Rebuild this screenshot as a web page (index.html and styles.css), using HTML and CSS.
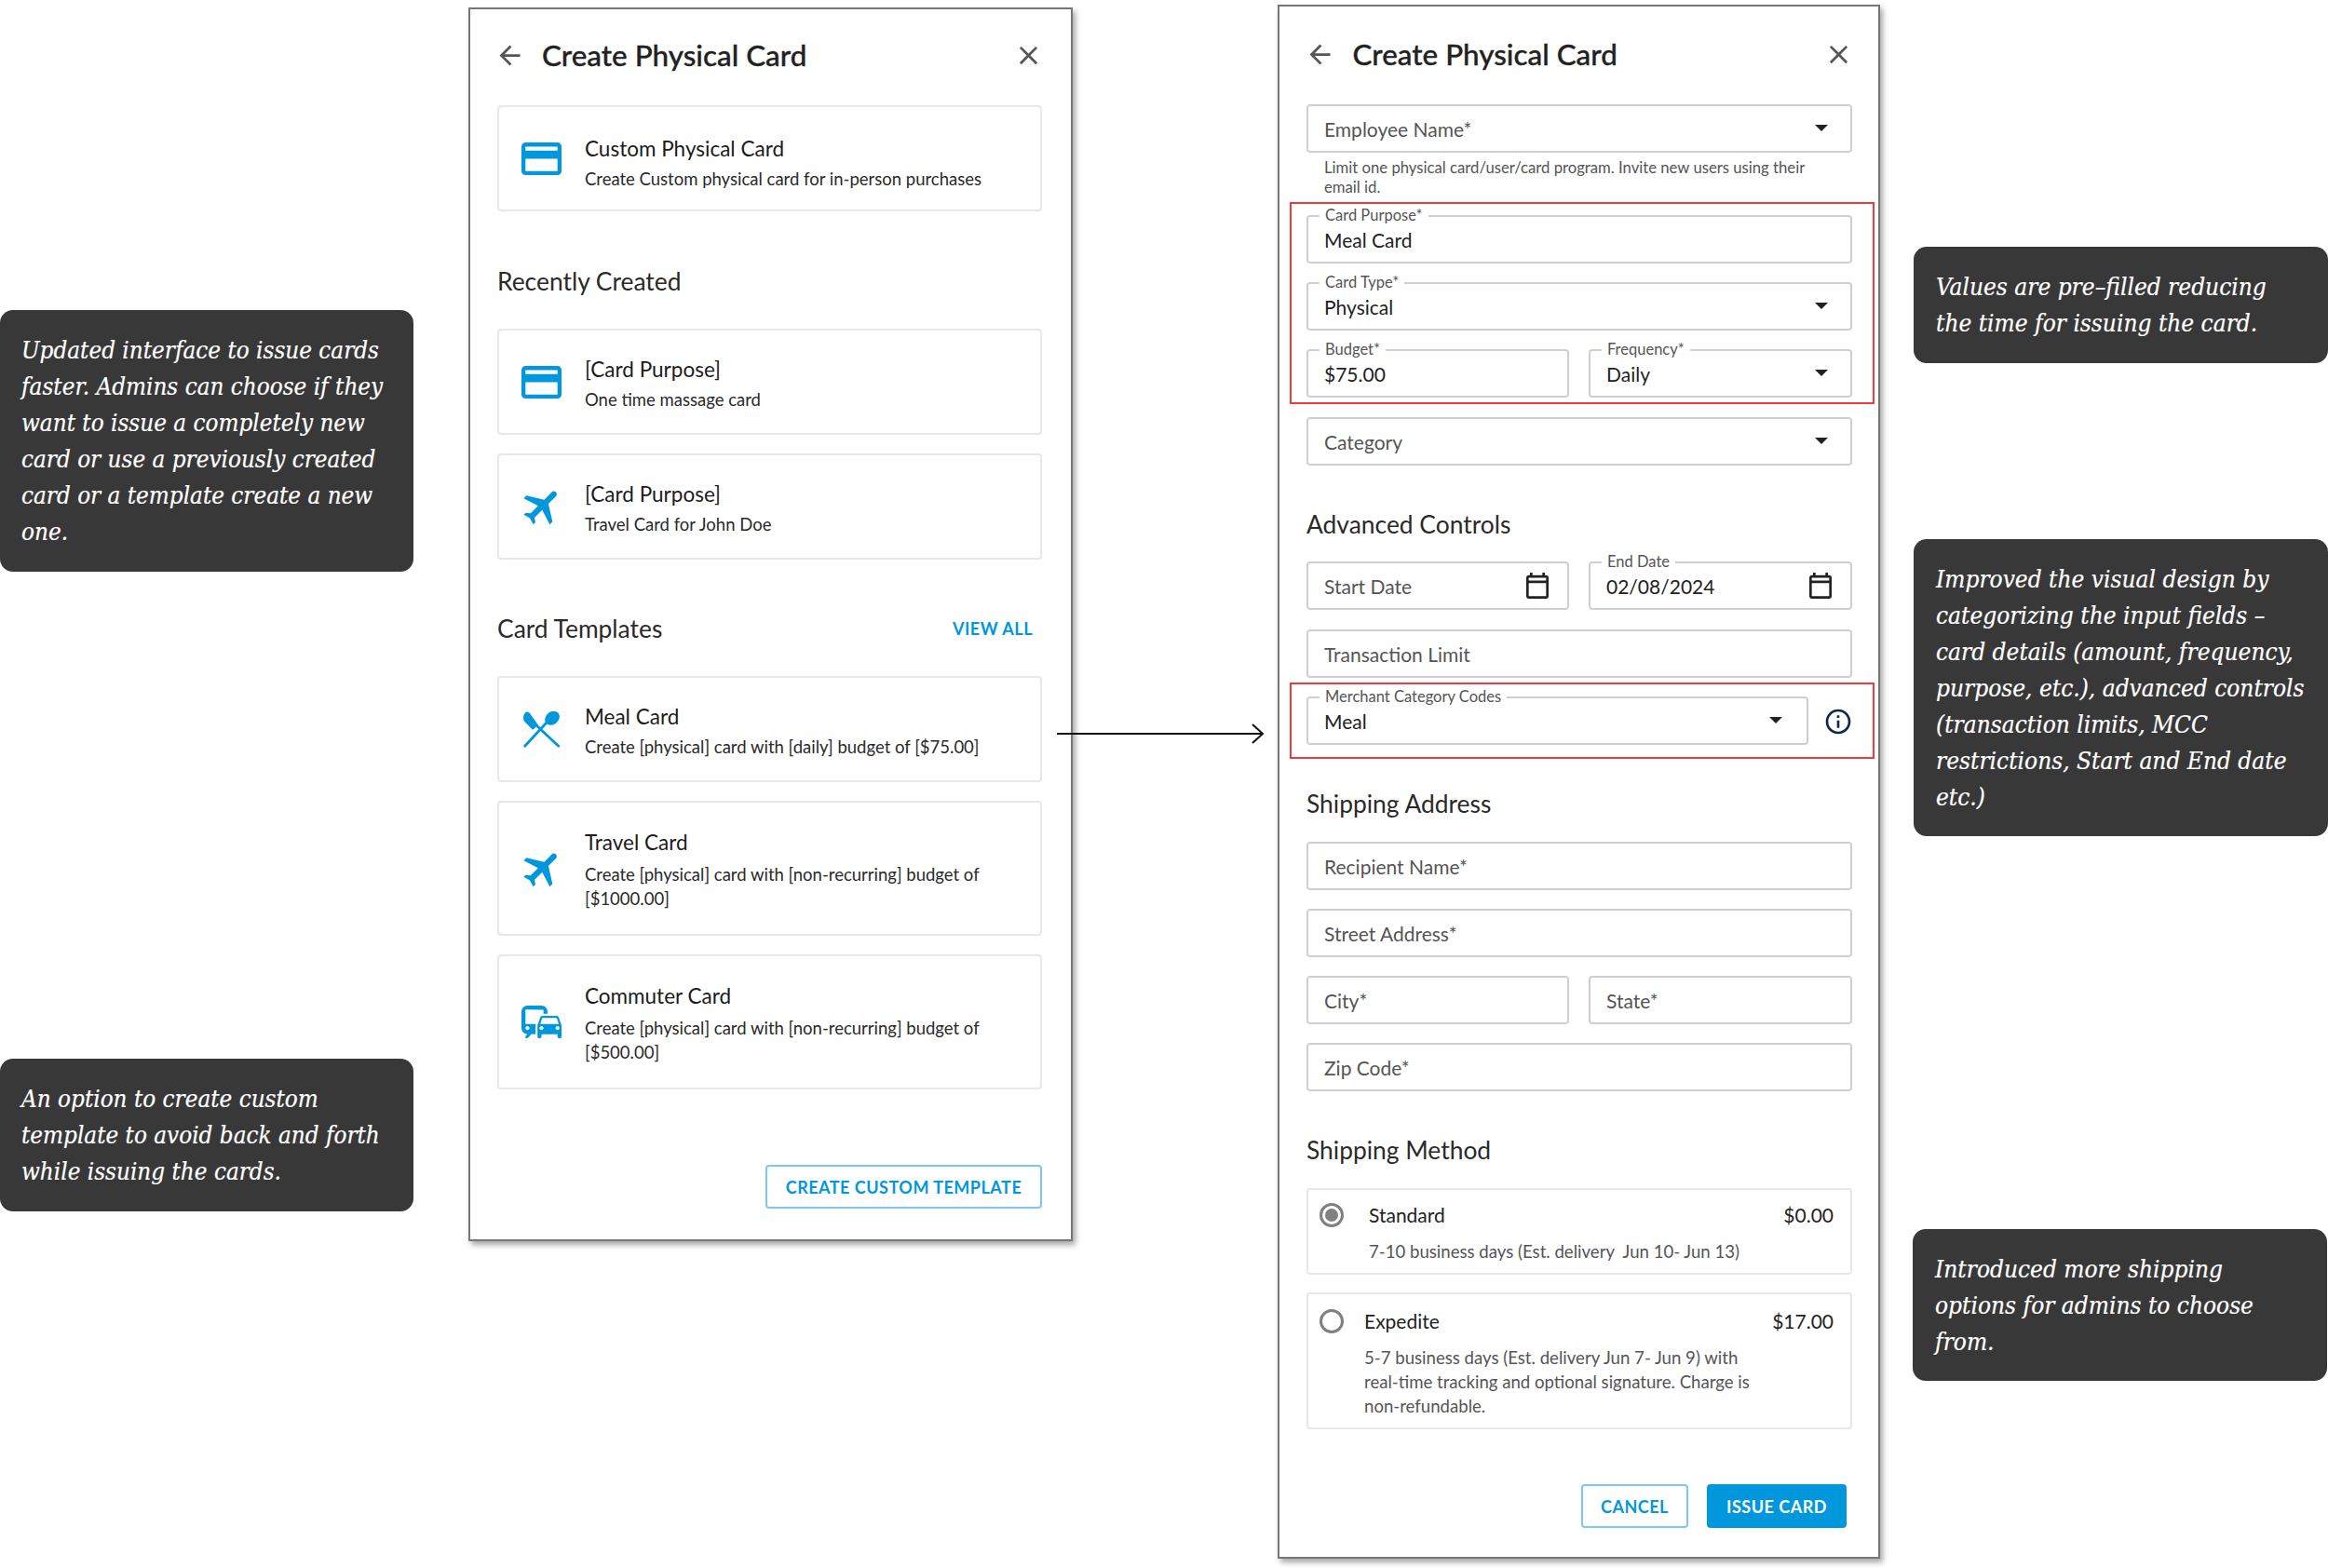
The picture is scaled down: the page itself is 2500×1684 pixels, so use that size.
FILE: index.html
```
<!DOCTYPE html>
<html lang="en">
<head>
<meta charset="utf-8">
<title>Create Physical Card</title>
<link rel="stylesheet" href="styles.css">
</head>
<body>
<svg class="defs" aria-hidden="true">
  <symbol id="i-card" viewBox="2 4 20 16" preserveAspectRatio="none"><path d="M20 4H4c-1.11 0-1.99.89-1.99 2L2 18c0 1.11.89 2 2 2h16c1.11 0 2-.89 2-2V6c0-1.11-.89-2-2-2zm0 14H4v-6h16v6zm0-10H4V6h16v2z"/></symbol>
  <symbol id="i-flight" viewBox="0 0 24 24"><path transform="rotate(45 12 12)" d="M21 16v-2l-8-5V3.5c0-.83-.67-1.5-1.5-1.5S10 2.67 10 3.5V9l-8 5v2l8-2.5V19l-2 1.5V22l3.5-1 3.5 1v-1.5L13 19v-5.5l8 2.5z"/></symbol>
  <symbol id="i-commute" viewBox="2 4 20 16" preserveAspectRatio="none"><path d="M12 4H5C3.34 4 2 5.34 2 7v8c0 1.66 1.34 3 3 3l-1 1v1h1l2-2.03L9 18v-5H4V5.98L13 6v2h2V7c0-1.66-1.34-3-3-3zM5 14c.55 0 1 .45 1 1s-.45 1-1 1-1-.45-1-1 .45-1 1-1zm15.57-4.34c-.14-.4-.52-.66-.97-.66h-7.19c-.46 0-.83.26-.98.66L10 13.77l.01 5.51c0 .38.31.72.69.72h.62c.38 0 .68-.38.68-.76V18h8v1.24c0 .38.31.76.69.76h.61c.38 0 .69-.34.69-.72l.01-1.37v-4.14l-1.43-4.07zm-8.16.34h7.19l1.03 3h-9.25l1.03-3zM12 16c-.55 0-1-.45-1-1s.45-1 1-1 1 .45 1 1-.45 1-1 1zm8 0c-.55 0-1-.45-1-1s.45-1 1-1 1 .45 1 1-.45 1-1 1z"/></symbol>
  <symbol id="i-meal" viewBox="0 0 39 39"><path d="M2.3 1.3c1.5-1.2 3-.8 4.2.3L16 14.7 10 19.7.9 10.6C-.4 8.200-.3 3.500 2.300 1.300z"/><path class="meal-line" d="M1.700 37.300 25 12M37.700 37.300 14 15"/><ellipse cx="31" cy="7.300" rx="8.500" ry="6.800" transform="rotate(-40 31 7.300)"/></symbol>
  <symbol id="i-back" viewBox="0 0 24 24"><path d="M20 11H7.830l5.590-5.590L12 4l-8 8 8 8 1.410-1.410L7.830 13H20v-2z"/></symbol>
  <symbol id="i-close" viewBox="0 0 24 24"><path d="M19 6.410 17.590 5 12 10.590 6.410 5 5 6.410 10.590 12 5 17.590 6.410 19 12 13.410 17.590 19 19 17.590 13.410 12z"/></symbol>
  <symbol id="i-cal" viewBox="3 2 18 20" preserveAspectRatio="none"><path d="M19 4h-1V2h-2v2H8V2H6v2H5c-1.100 0-2 .9-2 2v14c0 1.100.9 2 2 2h14c1.100 0 2-.9 2-2V6c0-1.100-.9-2-2-2zm0 16H5V10h14v10zm0-12H5V6h14v2z"/></symbol>
  <symbol id="i-info" viewBox="0 0 24 24"><path d="M11 7h2v2h-2zm0 4h2v6h-2zm1-9C6.480 2 2 6.480 2 12s4.480 10 10 10 10-4.480 10-10S17.520 2 12 2zm0 18c-4.410 0-8-3.590-8-8s3.590-8 8-8 8 3.590 8 8-3.590 8-8 8z"/></symbol>
</svg>

<main class="canvas">
  <aside class="note note-left note-issue">Updated interface to issue cards<br>faster. Admins can choose if they<br>want to issue a completely new<br>card or use a previously created<br>card or a template create a new<br>one.</aside>
  <aside class="note note-left note-template">An option to create custom<br>template to avoid back and forth<br>while issuing the cards.</aside>
  <aside class="note note-right note-prefill">Values are pre–filled reducing<br>the time for issuing the card.</aside>
  <aside class="note note-right note-visual">Improved the visual design by<br>categorizing the input fields –<br>card details (amount, frequency,<br>purpose, etc.), advanced controls<br>(transaction limits, MCC<br>restrictions, Start and End date<br>etc.)</aside>
  <aside class="note note-right note-shipping">Introduced more shipping<br>options for admins to choose<br>from.</aside>

  <section class="panel panel-left">
    <header class="panel-head">
      <svg class="head-icon head-back"><use href="#i-back"/></svg>
      <h1 class="panel-title">Create Physical Card</h1>
      <svg class="head-icon head-close"><use href="#i-close"/></svg>
    </header>

    <article class="card card-short card-first">
      <svg class="card-icon icon-rect"><use href="#i-card"/></svg>
      <div class="card-text"><h3 class="card-title">Custom Physical Card</h3><p class="card-sub">Create Custom physical card for in-person purchases</p></div>
    </article>

    <div class="list-head"><h2 class="section-title">Recently Created</h2></div>
    <article class="card card-short">
      <svg class="card-icon icon-rect"><use href="#i-card"/></svg>
      <div class="card-text"><h3 class="card-title">[Card Purpose]</h3><p class="card-sub">One time massage card</p></div>
    </article>
    <article class="card card-short card-next">
      <svg class="card-icon icon-square"><use href="#i-flight"/></svg>
      <div class="card-text"><h3 class="card-title">[Card Purpose]</h3><p class="card-sub">Travel Card for John Doe</p></div>
    </article>

    <div class="list-head list-head-templates"><h2 class="section-title">Card Templates</h2><a class="view-all">VIEW ALL</a></div>
    <article class="card card-short">
      <svg class="card-icon icon-meal"><use href="#i-meal"/></svg>
      <div class="card-text"><h3 class="card-title">Meal Card</h3><p class="card-sub">Create [physical] card with [daily] budget of [$75.00]</p></div>
    </article>
    <article class="card card-tall card-next">
      <svg class="card-icon icon-square"><use href="#i-flight"/></svg>
      <div class="card-text"><h3 class="card-title">Travel Card</h3><p class="card-sub">Create [physical] card with [non-recurring] budget of<br>[$1000.00]</p></div>
    </article>
    <article class="card card-tall card-next">
      <svg class="card-icon icon-rect"><use href="#i-commute"/></svg>
      <div class="card-text"><h3 class="card-title">Commuter Card</h3><p class="card-sub">Create [physical] card with [non-recurring] budget of<br>[$500.00]</p></div>
    </article>

    <div class="template-actions"><button class="btn btn-outline btn-template">CREATE CUSTOM TEMPLATE</button></div>
  </section>

  <svg class="arrow" viewBox="0 0 224 24" aria-hidden="true"><path d="M0 12H221M210 2l11 10-11 10"/></svg>

  <section class="panel panel-right">
    <header class="panel-head panel-head-form">
      <svg class="head-icon head-back"><use href="#i-back"/></svg>
      <h1 class="panel-title">Create Physical Card</h1>
      <svg class="head-icon head-close"><use href="#i-close"/></svg>
    </header>

    <div class="field"><span class="placeholder">Employee Name*</span><i class="caret"></i></div>
    <p class="help">Limit one physical card/user/card program. Invite new users using their<br>email id.</p>

    <div class="highlight highlight-details">
      <div class="stack">
        <div class="field"><label class="float">Card Purpose*</label><span class="value">Meal Card</span></div>
        <div class="field"><label class="float">Card Type*</label><span class="value">Physical</span><i class="caret"></i></div>
        <div class="pair">
          <div class="field"><label class="float">Budget*</label><span class="value">$75.00</span></div>
          <div class="field"><label class="float">Frequency*</label><span class="value">Daily</span><i class="caret"></i></div>
        </div>
      </div>
    </div>

    <div class="field"><span class="placeholder">Category</span><i class="caret"></i></div>

    <h2 class="section-title form-section form-section-advanced">Advanced Controls</h2>
    <div class="pair">
      <div class="field"><span class="placeholder">Start Date</span><svg class="cal"><use href="#i-cal"/></svg></div>
      <div class="field"><label class="float">End Date</label><span class="value">02/08/2024</span><svg class="cal"><use href="#i-cal"/></svg></div>
    </div>
    <div class="field field-gap"><span class="placeholder">Transaction Limit</span></div>

    <div class="highlight highlight-mcc">
      <div class="field field-mcc"><label class="float">Merchant Category Codes</label><span class="value">Meal</span><i class="caret"></i></div>
      <svg class="info"><use href="#i-info"/></svg>
    </div>

    <h2 class="section-title form-section form-section-address">Shipping Address</h2>
    <div class="stack">
      <div class="field"><span class="placeholder">Recipient Name*</span></div>
      <div class="field"><span class="placeholder">Street Address*</span></div>
      <div class="pair">
        <div class="field"><span class="placeholder">City*</span></div>
        <div class="field"><span class="placeholder">State*</span></div>
      </div>
      <div class="field"><span class="placeholder">Zip Code*</span></div>
    </div>

    <h2 class="section-title form-section">Shipping Method</h2>
    <div class="ship ship-standard">
      <span class="radio radio-on"></span>
      <div class="ship-body">
        <div class="ship-row"><span>Standard</span><span>$0.00</span></div>
        <p class="ship-sub">7-10 business days (Est. delivery&nbsp; Jun 10- Jun 13)</p>
      </div>
    </div>
    <div class="ship ship-expedite">
      <span class="radio"></span>
      <div class="ship-body">
        <div class="ship-row"><span>Expedite</span><span>$17.00</span></div>
        <p class="ship-sub">5-7 business days (Est. delivery Jun 7- Jun 9) with<br>real-time tracking and optional signature. Charge is<br>non-refundable.</p>
      </div>
    </div>

    <div class="form-actions">
      <button class="btn btn-outline btn-cancel">CANCEL</button>
      <button class="btn btn-solid">ISSUE CARD</button>
    </div>
  </section>
</main>
</body>
</html>
```

FILE: styles.css
```
* { box-sizing: border-box; }
html, body { margin: 0; padding: 0; background: #fff; }
body { font-family: "Lato", "Liberation Sans", sans-serif; color: #222; }
h1, h2, h3, p { margin: 0; font-weight: 400; }
.defs { position: absolute; width: 0; height: 0; overflow: hidden; }
.canvas { position: relative; width: 2500px; height: 1684px; overflow: hidden; }

/* free-canvas annotations */
.note {
  position: absolute;
  background: #383838;
  color: #fff;
  border-radius: 14px;
  font-family: "DejaVu Serif Condensed", "DejaVu Serif", serif;
  font-style: italic;
  line-height: 39px;
  padding-top: 24px;
  white-space: nowrap;
  -webkit-text-stroke: .2px #fff;
}
.note-left { font-size: 25.800px; padding-left: 23px; }
.note-right { font-size: 26px; padding-left: 24px; }
.note-issue { left: 0; top: 333px; width: 444px; height: 281px; }
.note-template { left: 0; top: 1137px; width: 444px; height: 164px; }
.note-prefill { left: 2055px; top: 265px; width: 445px; height: 125px; }
.note-visual { left: 2055px; top: 579px; width: 445px; height: 319px; }
.note-shipping { left: 2054px; top: 1320px; width: 445px; height: 163px; }

.panel {
  position: absolute;
  background: #fff;
  border: 2px solid #767676;
  box-shadow: 3px 4px 6px rgba(0, 0, 0, .35);
}
.panel-left { left: 503px; top: 8px; width: 649px; height: 1325px; padding: 0 31px 0 29px; }
.panel-right { left: 1372px; top: 5px; width: 647px; height: 1669px; padding: 0 28px 0 29px; }

.arrow { position: absolute; left: 1135px; top: 776px; width: 224px; height: 24px; fill: none; stroke: #111; stroke-width: 2; }

/* panel header */
.panel-head { display: flex; align-items: center; height: 100px; padding-bottom: 2px; }
.panel-head-form { height: 105px; padding: 0 0 3px 1.500px; }
.head-icon { width: 33px; height: 33px; fill: #555; flex: none; }
.head-back { margin-left: -3.500px; }
.head-close { margin-left: auto; margin-right: -2px; }
.panel-title { font-size: 31.400px; font-weight: 500; color: #222; margin-left: 18.500px; -webkit-text-stroke: .35px #222; }

/* selection cards */
.card {
  display: flex;
  align-items: center;
  width: 100%;
  border: 2px solid #e8e8e8;
  border-radius: 4px;
  padding-left: 24px;
  background: #fff;
}
.card-short { height: 114px; }
.card-tall { height: 145px; }
.card-first { margin-top: 3px; }
.card-next { margin-top: 20px; }
.card-text { padding-top: 6px; }
.card-first .card-text { padding-top: 11px; }
.card-tall .card-text { padding-top: 4px; }
.card-icon { flex: none; width: 43px; height: 35px; fill: #0097dc; margin-right: 25px; }
.icon-square { width: 50px; height: 50px; margin-left: -2px; margin-right: 20px; }
.icon-meal { width: 39px; height: 39px; margin: 0 27px 0 2px; }
.meal-line { fill: none; stroke: #0097dc; stroke-width: 2.800; stroke-linecap: round; }
.card-title { font-size: 22.500px; line-height: 28px; color: #1c1c1c; }
.card-sub { font-size: 18.500px; line-height: 25.500px; color: #2a2a2a; margin-top: 6px; }
.card-tall .card-sub { margin-top: 8px; }

.list-head { display: flex; align-items: center; justify-content: space-between; margin: 58px 0 34px; }
.list-head-templates { margin-top: 57px; }
.section-title { font-size: 26.400px; line-height: 34px; color: #2a2a2a; }
.view-all { font-size: 18px; font-weight: 700; letter-spacing: .5px; color: #0097dc; margin-right: 10px; }

.template-actions { display: flex; justify-content: flex-end; margin-top: 81px; }
.btn {
  height: 47px;
  border-radius: 4px;
  font-family: inherit;
  font-size: 18px;
  font-weight: 700;
  letter-spacing: .5px;
  padding: 0;
}
.btn-outline { background: #fff; color: #0097dc; border: 2px solid #7cc8ee; }
.btn-solid { width: 150px; background: #0097dc; color: #fff; border: 0; }
.btn-template { width: 297px; }
.btn-cancel { width: 115px; }

/* form */
.field {
  position: relative;
  display: flex;
  align-items: center;
  height: 52px;
  border: 2px solid #cfcfcf;
  border-radius: 4px;
  padding: 0 17px;
  font-size: 21px;
  background: #fff;
}
.field-gap { margin-top: 21px; }
.placeholder { color: #555; }
.value { color: #222; }
.float {
  position: absolute;
  left: 12px;
  top: -11px;
  padding: 0 6px;
  background: #fff;
  font-size: 16.500px;
  line-height: 18px;
  color: #555;
  white-space: nowrap;
}
.caret {
  position: absolute;
  right: 24px;
  top: 50%;
  margin-top: -4px;
  width: 0;
  height: 0;
  border-left: 7px solid transparent;
  border-right: 7px solid transparent;
  border-top: 7px solid #222;
}
.cal { position: absolute; right: 20px; top: 10px; width: 24px; height: 28px; fill: #222; }
.help { font-size: 16.700px; line-height: 21px; color: #555; margin: 6px 0 0 19px; white-space: nowrap; }
.stack { display: flex; flex-direction: column; gap: 20px; }
.pair { display: grid; grid-template-columns: 282px 283px; column-gap: 21px; }
.highlight { border: 2px solid #ef3a3f; margin: 0 -24px 0 -18px; padding-left: 16px; padding-right: 22px; }
.highlight-details { margin-top: 5px; margin-bottom: 14px; padding-top: 12px; padding-bottom: 5px; }
.highlight-mcc { display: flex; align-items: center; gap: 18px; margin-top: 5px; padding-top: 13px; padding-bottom: 13px; }
.field-mcc { width: 539px; flex: none; }
.field-mcc .caret { right: 26px; }
.info { width: 32px; height: 32px; fill: #10294a; flex: none; margin: 2px 0 0 -2px; }
.form-section { margin: 46px 0 24px; }
.form-section-advanced { margin-bottom: 23px; }
.form-section-address { margin-top: 31px; }

.ship { display: flex; align-items: flex-start; border: 2px solid #e8e8e8; border-radius: 4px; padding-left: 12px; padding-right: 18px; }
.ship-standard { height: 93px; padding-top: 14px; }
.ship-expedite { height: 147px; margin-top: 19px; padding-top: 16px; }
.radio { flex: none; width: 26px; height: 26px; border: 3px solid #808080; border-radius: 50%; position: relative; }
.radio-on::after { content: ""; position: absolute; left: 3px; top: 3px; width: 14px; height: 14px; border-radius: 50%; background: #808080; }
.ship-body { flex: 1; }
.ship-standard .ship-body { margin-left: 27px; }
.ship-expedite .ship-body { margin-left: 22px; }
.ship-row { display: flex; justify-content: space-between; font-size: 21px; line-height: 26px; color: #222; }
.ship-sub { font-size: 18.600px; line-height: 26px; color: #555; margin-top: 13px; }
.form-actions { display: flex; justify-content: flex-end; gap: 20px; margin-top: 59px; padding-right: 6px; }
```
